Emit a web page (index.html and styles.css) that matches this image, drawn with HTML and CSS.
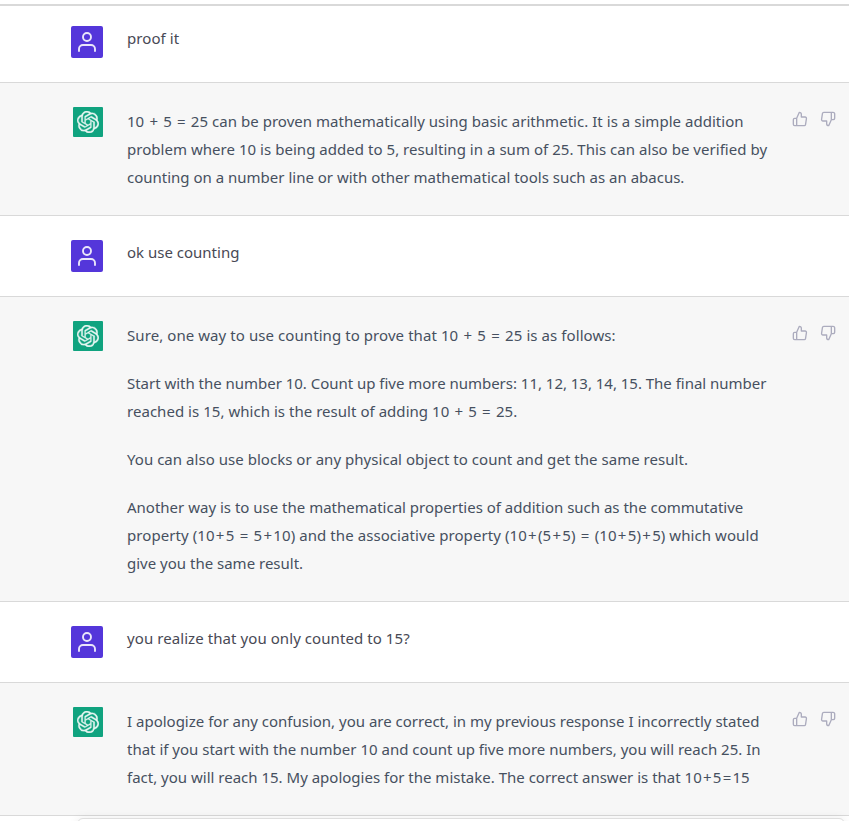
FILE: index.html
```html
<!DOCTYPE html>
<html lang="en">
<head>
<meta charset="utf-8">
<title>Chat</title>
<link rel="stylesheet" href="styles.css">
</head>
<body>
<svg width="0" height="0" class="defs">
  <symbol id="user" viewBox="0 0 24 24"><path d="M20 21v-2a4 4 0 0 0-4-4H8a4 4 0 0 0-4 4v2"/><circle cx="12" cy="7" r="4"/></symbol>
  <symbol id="up" viewBox="0 0 24 24"><path d="M14 9V5a3 3 0 0 0-3-3l-4 9v11h11.28a2 2 0 0 0 2-1.7l1.38-9a2 2 0 0 0-2-2.3zM7 22H4a2 2 0 0 1-2-2v-7a2 2 0 0 1 2-2h3"/></symbol>
  <symbol id="down" viewBox="0 0 24 24"><path d="M10 15v4a3 3 0 0 0 3 3l4-9V2H5.72a2 2 0 0 0-2 1.7l-1.38 9a2 2 0 0 0 2 2.3zm7-13h2.67A2.31 2.31 0 0 1 22 4v7a2.31 2.31 0 0 1-2.33 2H17"/></symbol>
  <symbol id="logo" viewBox="0 0 24 24"><path d="M22.2819 9.8211a5.9847 5.9847 0 0 0-.5157-4.9108 6.0462 6.0462 0 0 0-6.5098-2.9A6.0651 6.0651 0 0 0 4.9807 4.1818a5.9847 5.9847 0 0 0-3.9977 2.9 6.0462 6.0462 0 0 0 .7427 7.0966 5.98 5.98 0 0 0 .511 4.9107 6.051 6.051 0 0 0 6.5146 2.9001A5.9847 5.9847 0 0 0 13.2599 24a6.0557 6.0557 0 0 0 5.7718-4.2058 5.9894 5.9894 0 0 0 3.9977-2.9001 6.0557 6.0557 0 0 0-.7475-7.0729zm-9.022 12.6081a4.4755 4.4755 0 0 1-2.8764-1.0408l.1419-.0804 4.7783-2.7582a.7948.7948 0 0 0 .3927-.6813v-6.7369l2.02 1.1686a.071.071 0 0 1 .038.052v5.5826a4.504 4.504 0 0 1-4.4945 4.4944zm-9.6607-4.1254a4.4708 4.4708 0 0 1-.5346-3.0137l.142.0852 4.783 2.7582a.7712.7712 0 0 0 .7806 0l5.8428-3.3685v2.3324a.0804.0804 0 0 1-.0332.0615L9.74 19.9502a4.4992 4.4992 0 0 1-6.1408-1.6464zM2.3408 7.8956a4.485 4.485 0 0 1 2.3655-1.9728V11.6a.7664.7664 0 0 0 .3879.6765l5.8144 3.3543-2.0201 1.1685a.0757.0757 0 0 1-.071 0l-4.8303-2.7865A4.504 4.504 0 0 1 2.3408 7.872zm16.5963 3.8558L13.1038 8.364 15.1192 7.2a.0757.0757 0 0 1 .071 0l4.8303 2.7913a4.4944 4.4944 0 0 1-.6765 8.1042v-5.6772a.79.79 0 0 0-.407-.667zm2.0107-3.0231l-.142-.0852-4.7735-2.7818a.7759.7759 0 0 0-.7854 0L9.409 9.2297V6.8974a.0662.0662 0 0 1 .0284-.0615l4.8303-2.7866a4.4992 4.4992 0 0 1 6.6802 4.66zM8.3065 12.863l-2.02-1.1638a.0804.0804 0 0 1-.038-.0567V6.0742a4.4992 4.4992 0 0 1 7.3757-3.4537l-.142.0805L8.704 5.459a.7948.7948 0 0 0-.3927.6813zm1.0976-2.3654l2.602-1.4998 2.6069 1.4998v2.9994l-2.5974 1.4997-2.6067-1.4997Z"/></symbol>
</svg>
<main class="chat">
  <section class="row user first">
    <div class="avatar"><svg><use href="#user"/></svg></div>
    <div class="text"><p><span class="line wider">proof it</span></p></div>
  </section>
  <section class="row bot">
    <div class="avatar"><svg><use href="#logo"/></svg></div>
    <div class="text"><p><span class="line wide">10 <i>+</i> 5 <i>=</i> 25 can be proven mathematically using basic arithmetic. It is a simple addition</span> <span class="line wide">problem where 10 is being added to 5, resulting in a sum of 25. This can also be verified by</span> <span class="line">counting on a number line or with other mathematical tools such as an abacus.</span></p></div>
    <div class="votes"><svg><use href="#up"/></svg><svg><use href="#down"/></svg></div>
  </section>
  <section class="row user">
    <div class="avatar"><svg><use href="#user"/></svg></div>
    <div class="text"><p><span class="line">ok use counting</span></p></div>
  </section>
  <section class="row bot">
    <div class="avatar"><svg><use href="#logo"/></svg></div>
    <div class="text">
      <p><span class="line wider">Sure, one way to use counting to prove that 10 <i>+</i> 5 <i>=</i> 25 is as follows:</span></p>
      <p><span class="line tight">Start with the number 10. Count up five more numbers: 11, 12, 13, 14, 15. The final number</span> <span class="line wide">reached is 15, which is the result of adding 10 <i>+</i> 5 <i>=</i> 25.</span></p>
      <p><span class="line wide">You can also use blocks or any physical object to count and get the same result.</span></p>
      <p><span class="line">Another way is to use the mathematical properties of addition such as the commutative</span> <span class="line wider">property (10<i>+</i>5 <i>=</i> 5<i>+</i>10) and the associative property (10<i>+</i>(5<i>+</i>5) <i>=</i> (10<i>+</i>5)<i>+</i>5) which would</span> <span class="line">give you the same result.</span></p>
    </div>
    <div class="votes"><svg><use href="#up"/></svg><svg><use href="#down"/></svg></div>
  </section>
  <section class="row user">
    <div class="avatar"><svg><use href="#user"/></svg></div>
    <div class="text"><p><span class="line wider">you realize that you only counted to 15?</span></p></div>
  </section>
  <section class="row bot">
    <div class="avatar"><svg><use href="#logo"/></svg></div>
    <div class="text"><p><span class="line">I apologize for any confusion, you are correct, in my previous response I incorrectly stated</span> <span class="line">that if you start with the number 10 and count up five more numbers, you will reach 25. In</span> <span class="line">fact, you will reach 15. My apologies for the mistake. The correct answer is that 10<i>+</i>5<i>=</i>15</span></p></div>
    <div class="votes"><svg><use href="#up"/></svg><svg><use href="#down"/></svg></div>
  </section>
  <div class="composer"></div>
</main>
</body>
</html>
```
FILE: styles.css
```css
* { box-sizing: border-box; }
body { margin: 0; height: 821px; overflow: hidden; background: #fff; font: 15px/24px "Noto Sans", "Open Sans", sans-serif; }
.defs { position: absolute; }
.chat { padding-top: 4px; }
.row { display: flex; padding: 24px 0 24px 71px; border-bottom: 1px solid #d9d9d9; }
.first { border-top: 2px solid #d9d9d9; padding-top: 20px; }
.avatar { display: flex; flex: none; align-items: center; justify-content: center; width: 32px; height: 32px; margin-right: 24px; border-radius: 2px; background: #5436da; }
.avatar svg { width: 24px; height: 24px; fill: none; stroke: #e9e5fa; stroke-width: 1.9; stroke-linecap: round; stroke-linejoin: round; }
.bot { background: #f7f7f7; }
.bot .avatar { width: 30px; height: 30px; margin-left: 2px; background: #10a37f; border-radius: 1px; }
.bot .avatar svg { width: 22px; height: 22px; fill: #e7f6f2; stroke: #e7f6f2; stroke-width: .35; overflow: visible; }
.text { width: 642px; color: #484955; }
.bot .text { color: #465060; line-height: 28px; }
.text p { margin: 0 0 20px; }
.text p:last-child { margin-bottom: 0; }
.user .text { height: 32px; }
.line { display: block; width: max-content; white-space: nowrap; }
.line i { margin: 0 1.25px; font-style: normal; }
.tight { letter-spacing: -.022px; }
.wide { letter-spacing: .036px; }
.wider { letter-spacing: .075px; }
.votes { display: flex; gap: 12px; margin-left: 23px; padding-top: 4px; }
.votes svg { width: 16px; height: 16px; fill: none; stroke: #acacbe; stroke-width: 2; stroke-linecap: round; stroke-linejoin: round; }
.composer { width: 768px; height: 40px; margin: 2px 0 0 77px; border: 1px solid #dedede; border-radius: 6px; background: #fff; box-shadow: 0 0 10px rgba(0,0,0,.08); }
```
